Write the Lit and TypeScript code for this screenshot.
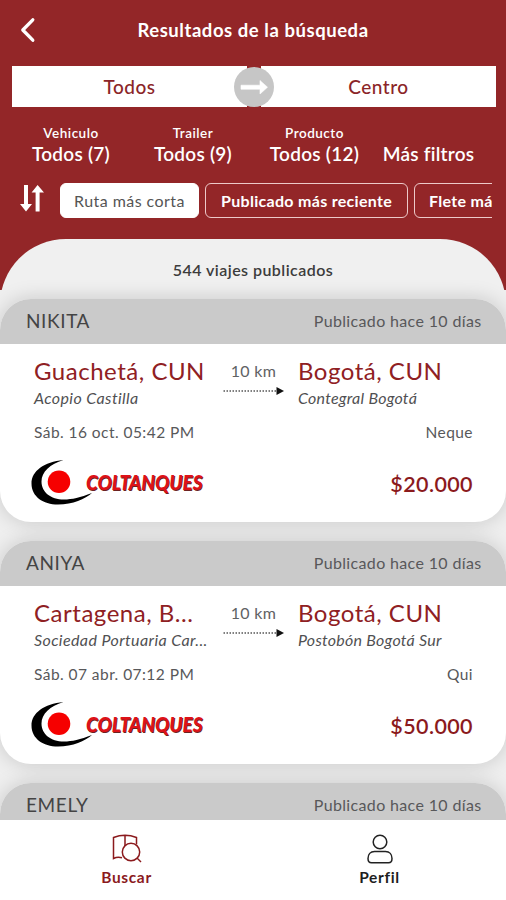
import { LitElement, html, css } from "lit";
import { customElement, property } from "lit/decorators.js";

interface Trip {
  owner: string;
  from: string;
  fromPlace: string;
  to: string;
  toPlace: string;
  date: string;
  cargo: string;
  price: string;
}

const TRIPS: Trip[] = [
  { owner: "NIKITA", from: "Guachetá, CUN", fromPlace: "Acopio Castilla", to: "Bogotá, CUN", toPlace: "Contegral Bogotá", date: "Sáb. 16 oct. 05:42 PM", cargo: "Neque", price: "$20.000" },
  { owner: "ANIYA", from: "Cartagena, B...", fromPlace: "Sociedad Portuaria Car...", to: "Bogotá, CUN", toPlace: "Postobón Bogotá Sur", date: "Sáb. 07 abr. 07:12 PM", cargo: "Qui", price: "$50.000" },
  { owner: "EMELY", from: "Cartagena, B...", fromPlace: "Sociedad Portuaria Car...", to: "Bogotá, CUN", toPlace: "Postobón Bogotá Sur", date: "Sáb. 07 abr. 07:12 PM", cargo: "Qui", price: "$50.000" },
];

const companyLogo = html`<svg class="logo" width="176" height="48" viewBox="0 0 176 48">
  <path d="M33.5 1C14 3 1.5 12 1.5 24.500C1.500 37.500 13 45.500 28 45.500C43 45.500 55 40 62 34C50 38.500 42 40.500 34 40.500C20.500 40.500 11.500 33 11.500 22.500C11.500 13 20 5 33.500 1Z" fill="#000"/>
  <circle cx="29" cy="22.800" r="11.300" fill="#f60000"/>
  <g font-family="Lato, sans-serif" font-weight="900" font-style="italic" font-size="20.500">
    <text x="56.800" y="31.800" textLength="116.500" lengthAdjust="spacingAndGlyphs" fill="#6b2222">COLTANQUES</text>
    <text x="56" y="31" textLength="116.500" lengthAdjust="spacingAndGlyphs" fill="#dd1218">COLTANQUES</text>
  </g>
</svg>`;

@customElement("trip-card")
export class TripCard extends LitElement {
  @property({ attribute: false }) trip!: Trip;

  static styles = css`
    :host { display: block; flex: none; height: 222.5px; border-radius: 31px; background: #fff; overflow: hidden; box-shadow: 0 0 20px rgba(0, 0, 0, 0.17); }
    .head { height: 44.5px; box-sizing: border-box; padding: 0 24.500px 1px 26px; background: #cacaca; display: flex; align-items: center; justify-content: space-between; color: #58585a; font-size: 16px; letter-spacing: 0.35px; }
    .owner { font-size: 19px; letter-spacing: 0.6px; color: #444; margin-top: -1px; }
    .body { padding: 13px 33px 0 34px; display: flex; flex-direction: column; }
    .route { display: grid; grid-template-columns: 189px 75px 1fr; height: 53px; }
    .city { font-size: 24px; line-height: 28px; letter-spacing: 0.52px; color: #8f2023; white-space: nowrap; }
    .place { font-size: 16px; line-height: 26px; letter-spacing: 0.4px; font-style: italic; color: #505052; white-space: nowrap; }
    .to .place { letter-spacing: 0.25px; }
    .dist { font-size: 16px; line-height: 28px; letter-spacing: 0.3px; color: #606264; width: 61px; text-align: center; }
    .dist svg { display: block; margin-top: 1px; }
    .info { display: flex; justify-content: space-between; margin-top: 12.500px; font-size: 15.500px; line-height: 20px; letter-spacing: 0.45px; color: #58585a; }
    .foot { display: flex; justify-content: space-between; align-items: center; height: 48px; margin-top: 17px; margin-left: -4px; }
    .logo { display: block; }
    .price { font-size: 21.500px; font-weight: 600; letter-spacing: 0.4px; color: #8b1a1d; padding-top: 2px; }
  `;

  render() {
    const t = this.trip;
    return html`
      <div class="head"><span class="owner">${t.owner}</span><span>Publicado hace 10 días</span></div>
      <div class="body">
        <div class="route">
          <div><div class="city">${t.from}</div><div class="place">${t.fromPlace}</div></div>
          <div class="dist">10 km
            <svg width="61" height="10" viewBox="0 0 61 10"><path d="M.5 5H54" stroke="#555" stroke-width="1.500" stroke-dasharray="1.500 1.500"/><path d="M53.500 1L61 5L53.500 9Z" fill="#111"/></svg>
          </div>
          <div class="to"><div class="city">${t.to}</div><div class="place">${t.toPlace}</div></div>
        </div>
        <div class="info"><span>${t.date}</span><span>${t.cargo}</span></div>
        <div class="foot">${companyLogo}<span class="price">${t.price}</span></div>
      </div>`;
  }
}

@customElement("app-root")
export class AppRoot extends LitElement {
  static styles = css`
    :host { display: flex; flex-direction: column; width: 506px; height: 900px; overflow: hidden; font-family: Lato, sans-serif; background: #efefef; }
    .scroll { flex: 1; min-height: 0; overflow: hidden; }
    .top { background: #932628; color: #fff; height: 290px; overflow: hidden; }
    .bar { display: grid; grid-template-columns: 60px 1fr 60px; align-items: center; height: 60px; }
    .back { margin-left: 20px; display: block; }
    .title { text-align: center; font-size: 18.500px; font-weight: 700; letter-spacing: 0.55px; }
    .places { display: flex; gap: 14px; padding: 0 10px 0 12px; margin-top: 6px; position: relative; }
    .place { flex: 1; height: 41px; background: #fff; color: #8b2528; display: flex; align-items: center; justify-content: center; font-size: 19px; font-weight: 500; letter-spacing: 0.5px; }
    .swap { position: absolute; left: 234px; top: 0.500px; }
    .filters { display: grid; grid-template-columns: 122px 122px 121px 107px; margin: 15.500px 0 0 10px; height: 42px; }
    .filter { display: flex; flex-direction: column; align-items: center; justify-content: flex-end; white-space: nowrap; }
    .label { font-size: 13.500px; line-height: 20px; font-weight: 600; letter-spacing: 0.5px; }
    .value { font-size: 19px; line-height: 22px; font-weight: 600; letter-spacing: 0.25px; }
    .sort { display: flex; align-items: center; margin: 18.500px 14px 0 20px; height: 35px; }
    .sort svg { flex: none; margin-top: -5px; }
    .chips { display: flex; gap: 6px; margin-left: 15px; overflow: hidden; flex: 1; }
    .chip { flex: none; box-sizing: border-box; height: 35px; border: 1.500px solid #edc9c9; border-radius: 6px; display: flex; align-items: center; justify-content: center; font-size: 16px; font-weight: 700; letter-spacing: 0.3px; white-space: nowrap; }
    .on { width: 139px; background: #fff; border-color: #fff; color: #555; font-weight: 400; letter-spacing: 0.45px; }
    .recent { width: 203px; }
    .freight { width: 150px; justify-content: flex-start; padding-left: 14px; }
    .sheet { margin-top: 20.500px; height: 80px; border-radius: 66px 66px 0 0; background: #f0f0f0; }
    .count { color: #3c3c3c; text-align: center; font-size: 16px; font-weight: 600; letter-spacing: 0.45px; line-height: 62px; }
    .list { display: flex; flex-direction: column; gap: 19.500px; margin-top: 9px; }
    .nav { flex: none; position: relative; height: 80.500px; background: #fff; display: grid; grid-template-columns: 1fr 1fr; }
    .tab { display: flex; flex-direction: column; align-items: center; padding-top: 13px; font-size: 15.500px; line-height: 20px; font-weight: 700; letter-spacing: 0.65px; color: #1e1e1e; }
    .tab svg { display: block; margin-bottom: 3px; }
    .active { color: #8b1a1d; }
  `;

  filter(label: string, value: string) {
    return html`<div class="filter"><span class="label">${label}</span><span class="value">${value}</span></div>`;
  }

  render() {
    return html`
      <div class="scroll">
        <div class="top">
          <div class="bar">
            <svg class="back" width="16" height="26" viewBox="0 0 16 26"><path d="M12.800 2.800L2.800 13L12.800 23.200" fill="none" stroke="#fff" stroke-width="3.300" stroke-linecap="round" stroke-linejoin="round"/></svg>
            <div class="title">Resultados de la búsqueda</div>
          </div>
          <div class="places">
            <div class="place">Todos</div>
            <div class="place">Centro</div>
            <svg class="swap" width="40" height="40" viewBox="0 0 40 40"><circle cx="20" cy="20" r="20" fill="#c6c6c6"/><path d="M7 18.200H26V13.500L33.500 20.200L26 27V22.200H7Z" fill="#fff" stroke="#fff" stroke-width=".6" stroke-linejoin="round"/></svg>
          </div>
          <div class="filters">
            ${this.filter("Vehiculo", "Todos (7)")}
            ${this.filter("Trailer", "Todos (9)")}
            ${this.filter("Producto", "Todos (12)")}
            ${this.filter("", "Más filtros")}
          </div>
          <div class="sort">
            <svg width="25" height="29" viewBox="0 0 25 29"><path d="M4 1H8V20H12L6 27.500L0 20H4ZM15.600 27.500V8.500H11.600L17.600 1L24 8.500H19.600V27.500Z" fill="#fff"/></svg>
            <div class="chips">
              <div class="chip on">Ruta más corta</div>
              <div class="chip recent">Publicado más reciente</div>
              <div class="chip freight">Flete más alto</div>
            </div>
          </div>
          <div class="sheet"><div class="count">544 viajes publicados</div></div>
        </div>
        <div class="list">${TRIPS.map((t) => html`<trip-card .trip=${t}></trip-card>`)}</div>
      </div>
      <div class="nav">
        <div class="tab active">
          <svg width="30" height="31" viewBox="0 0 30 31" fill="none" stroke="#8b1a1d" stroke-width="1.500"><path d="M10 24.800C7 23.800 4 24.200 1.500 25.500V4.500C9 1.600 17 1.600 24.500 4.500V11.500M13 2.500V13"/><circle cx="19" cy="19" r="8.700"/><path d="M25 25L29 29"/></svg>
          <span>Buscar</span>
        </div>
        <div class="tab">
          <svg width="28" height="31" viewBox="0 0 28 31" fill="none" stroke="#222" stroke-width="1.500"><circle cx="14" cy="9" r="6.800"/><path d="M8.500 18.500H19.500C23.500 18.500 26 21.500 26 25.500C26 28.500 25 29.800 22.500 29.800H5.500C3 29.800 2 28.500 2 25.500C2 21.500 4.500 18.500 8.500 18.500Z"/></svg>
          <span>Perfil</span>
        </div>
      </div>`;
  }
}
